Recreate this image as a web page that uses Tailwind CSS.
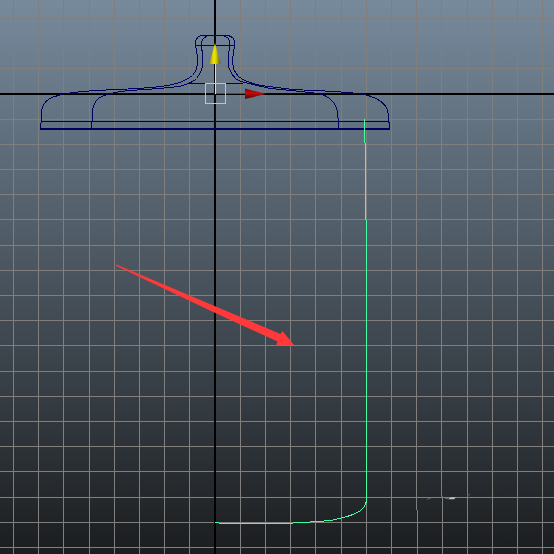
<!DOCTYPE html>
<html lang="en">
<head>
    <meta charset="UTF-8">
    <meta name="viewport" content="width=device-width, initial-scale=1.0">
    <title>Front view</title>
    <script src="https://cdn.jsdelivr.net/npm/@tailwindcss/browser@4"></script>
</head>
<body class="min-h-screen bg-[#1b1d1f]">
    <main class="w-full bg-linear-to-b/srgb from-[#778a9c] to-[#1b1d1f]">
        <svg class="block w-full h-auto" viewBox="0 0 554 554" fill="none" role="img" aria-label="Viewport with lid wireframe and profile curve">
            <!-- grid -->
            <g stroke="#807f7e" shape-rendering="crispEdges">
                <path d="M13.5 0V554M38.5 0V554M63.5 0V554M89.5 0V554M114.5 0V554M139.5 0V554M164.5 0V554M189.5 0V554M240.5 0V554M265.5 0V554M290.5 0V554M315.5 0V554M341.5 0V554M366.5 0V554M391.5 0V554M416.5 0V510M417.5 510V554M441.5 0V497M442.5 497V554M467.5 0V554M492.5 0V554M517.5 0V554M542.5 0V554"/>
                <path d="M0 18.5H554M0 43.5H554M0 68.5H554M0 119.5H554M0 144.5H554M0 169.5H554M0 194.5H554M0 219.5H554M0 245.5H554M0 270.5H554M0 295.5H554M0 320.5H554M0 345.5H554M0 371.5H554M0 396.5H554M0 421.5H554M0 446.5H554M0 471.5H554M0 497.5H554M0 522.5H554M0 547.5H554"/>
            </g>

            <!-- axes -->
            <path d="M0 94H554M215 0V554" stroke="#000" stroke-width="2" shape-rendering="crispEdges"/>

            <!-- lid -->
            <g stroke="#000062" shape-rendering="crispEdges">
                <path d="M40.5 128.5V124.5L41.5 121.5V111.5C42.5 103.5 48.5 97.5 58.5 95.5C64.5 93.5 71.5 92.5 82.5 91.5L95.5 90.5L138.5 88.5L161.5 86.5C177.5 84.5 186.5 80.5 192.5 75.5L196.5 69.5L197.5 63.5V57.5L196.5 49.5L195.5 45.5V40.5L198.5 36.5L201.5 35.5H228.5L232.5 37.5L234.5 40.5V46.5L233.5 51.5L232.5 60.5L233.5 69.5L238.5 76.5C243.5 80.5 251.5 83.5 260.5 85.5L292.5 89.5L335.5 91.5L358.5 93.5C371.5 95.5 381.5 99.5 386.5 107.5L388.5 114.5V121.5L389.5 123.5V128.5"/>
                <path d="M91.5 128.5V124.5L92.5 119.5V110.5C93.5 102.5 98.5 96.5 107.5 94.5C112.5 92.5 119.5 91.5 129.5 90.5L159.5 88.5L179.5 86.5C186.5 84.5 193.5 82.5 196.5 78.5L200.5 72.5L202.5 66.5V53.5L201.5 47.5V41.5L203.5 38.5L207.5 35.5M222.5 35.5L227.5 37.5L229.5 40.5V47.5L228.5 54.5V66.5L231.5 73.5L235.5 78.5C240.5 82.5 246.5 82.5 252.5 84.5L270.5 88.5L300.5 91.5L318.5 93.5C327.5 95.5 333.5 100.5 336.5 107.5L337.5 112.5V116.5L338.5 119.5V128.5"/>
                <path d="M195 45.5H235M190 83.5H243M67 93.5H365M42 121.5H389M215.5 36V129"/>
                <path d="M40 129H390" stroke-width="2"/>
            </g>

            <!-- profile curve -->
            <path d="M364.5 119V142.5L365.5 143.5V219.5L366.5 220.5V500.5C365.5 506.5 362.5 510.5 355.5 513.5C348.5 516.5 340.5 518.5 330.5 520.5C318.5 521.5 308.5 522.5 293.5 522.5L292.5 523.5H219.5L218.5 522.5H215" stroke="#43ffa3" shape-rendering="crispEdges"/>

            <!-- move manipulator -->
            <path d="M215.5 63V94" stroke="#f4f02c" shape-rendering="crispEdges"/>
            <path d="M216 93.5H246" stroke="#e90d0d" shape-rendering="crispEdges"/>
            <path d="M215 43L209.500 64H220.500Z" fill="url(#yTip)"/>
            <path d="M266 94L245 88.500V99Z" fill="url(#xTip)"/>
            <rect x="205.5" y="83.5" width="20" height="20" stroke="#7cdcfa" shape-rendering="crispEdges"/>

            <!-- pointer arrow -->
            <path d="M115.500 265.500L116.500 264.500L280.500 334L282.500 331L294 345L276 345.800L277.500 341.500L211 311Z" fill="#ff3939"/>

            <!-- specks -->
            <path d="M448 499L451 497.200L456 497.500L454 499.200H449Z" fill="#c0c2bf"/>
            <path d="M427 499.500L431 498M445 498.500H448M467 495.500L470 494.500M441 496.500H443" stroke="#5d6364"/>

            <defs>
                <linearGradient id="yTip" x1="210" x2="220" gradientUnits="userSpaceOnUse">
                    <stop stop-color="#a7a20e"/>
                    <stop offset=".4" stop-color="#f1e800"/>
                    <stop offset=".6" stop-color="#d8d000"/>
                    <stop offset="1" stop-color="#6b670b"/>
                </linearGradient>
                <linearGradient id="xTip" x1="0" x2="0" y1="89" y2="99" gradientUnits="userSpaceOnUse">
                    <stop stop-color="#7b0a0a"/>
                    <stop offset=".4" stop-color="#c80909"/>
                    <stop offset="1" stop-color="#500606"/>
                </linearGradient>
            </defs>
        </svg>
    </main>
</body>
</html>
